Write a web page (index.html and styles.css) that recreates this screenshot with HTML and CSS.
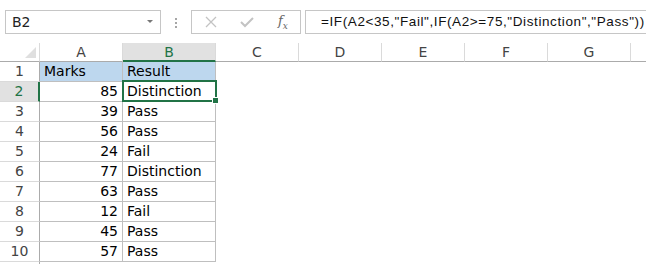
FILE: index.html
```html
<!DOCTYPE html>
<html lang="en">
<head>
    <meta charset="UTF-8">
    <title>Marks</title>
    <link rel="stylesheet" href="styles.css">
</head>
<body>
    <div class="toolbar">
        <div class="name-box">B2<span class="name-box__caret"></span></div>
        <div class="grip"><span></span><span></span><span></span></div>
        <div class="fx-box">
            <svg class="fx-box__icon" width="12" height="12" viewBox="0 0 12 12"><path d="M1 1 L11 11 M11 1 L1 11" stroke="#c3c3c3" stroke-width="1.3" fill="none"/></svg>
            <svg class="fx-box__icon" width="14" height="12" viewBox="0 0 14 12"><path d="M1 6 L5 10 L13 2" stroke="#c3c3c3" stroke-width="2" fill="none"/></svg>
            <span class="fx-box__fx">f<sub>x</sub></span>
        </div>
        <div class="formula">=IF(A2&lt;35,"Fail",IF(A2&gt;=75,"Distinction","Pass"))</div>
    </div>

    <div class="sheet">
        <div class="col-head col-head--corner"><span class="corner-tri"></span></div>
        <div class="col-head">A</div>
        <div class="col-head col-head--active">B</div>
        <div class="col-head">C</div>
        <div class="col-head">D</div>
        <div class="col-head">E</div>
        <div class="col-head">F</div>
        <div class="col-head">G</div>
        <div class="col-head col-head--rest"></div>

        <div class="row-head">1</div>
        <div class="cell cell--title">Marks</div>
        <div class="cell cell--title">Result</div>
        <div class="blank"></div>

        <div class="row-head row-head--active">2</div>
        <div class="cell cell--num">85</div>
        <div class="cell cell--selected">Distinction</div>
        <div class="blank"></div>

        <div class="row-head">3</div>
        <div class="cell cell--num">39</div>
        <div class="cell">Pass</div>
        <div class="blank"></div>

        <div class="row-head">4</div>
        <div class="cell cell--num">56</div>
        <div class="cell">Pass</div>
        <div class="blank"></div>

        <div class="row-head">5</div>
        <div class="cell cell--num">24</div>
        <div class="cell">Fail</div>
        <div class="blank"></div>

        <div class="row-head">6</div>
        <div class="cell cell--num">77</div>
        <div class="cell">Distinction</div>
        <div class="blank"></div>

        <div class="row-head">7</div>
        <div class="cell cell--num">63</div>
        <div class="cell">Pass</div>
        <div class="blank"></div>

        <div class="row-head">8</div>
        <div class="cell cell--num">12</div>
        <div class="cell">Fail</div>
        <div class="blank"></div>

        <div class="row-head">9</div>
        <div class="cell cell--num">45</div>
        <div class="cell">Pass</div>
        <div class="blank"></div>

        <div class="row-head">10</div>
        <div class="cell cell--num">57</div>
        <div class="cell">Pass</div>
        <div class="blank"></div>

        <div class="row-head row-head--next"></div>
    </div>
</body>
</html>
```

FILE: styles.css
```css
body {
    margin: 0;
    background: #fff;
    font-family: "DejaVu Sans", Verdana, sans-serif;
    font-size: 14px;
    color: #000;
    overflow: hidden;
    height: 264px;
}
.toolbar {
    display: flex;
    align-items: flex-start;
    height: 43px;
    padding: 10px 0 0 5px;
    box-sizing: border-box;
}
.name-box {
    position: relative;
    width: 156px;
    height: 24px;
    box-sizing: border-box;
    border: 1px solid #c6c6c6;
    padding-left: 6px;
    line-height: 22px;
    color: #222;
}
.name-box__caret {
    position: absolute;
    right: 7px;
    top: 9px;
    border-left: 3px solid transparent;
    border-right: 3px solid transparent;
    border-top: 3px solid #777;
}
.grip {
    display: flex;
    flex-direction: column;
    gap: 2px;
    padding: 8px 0 0 0;
    margin: 0 14px 0 14px;
}
.grip span {
    width: 2px;
    height: 2px;
    background: #a6a6a6;
}
.fx-box {
    display: flex;
    align-items: center;
    width: 110px;
    height: 24px;
    box-sizing: border-box;
    border: 1px solid #c6c6c6;
    padding-left: 13px;
    gap: 23px;
}
.fx-box__fx {
    font-family: "DejaVu Serif", serif;
    font-style: italic;
    font-size: 13px;
    color: #666;
    margin-left: 1px;
}
.fx-box__fx sub {
    font-size: 9px;
}
.formula {
    flex: 1;
    height: 24px;
    box-sizing: border-box;
    margin-left: 4px;
    border: 1px solid #c6c6c6;
    border-right: none;
    padding-left: 15px;
    font-family: "Liberation Sans", Arial, sans-serif;
    font-size: 13.5px;
    letter-spacing: 0.6px;
    line-height: 22px;
    color: #111;
    white-space: nowrap;
    overflow: hidden;
}
.sheet {
    display: grid;
    grid-template-columns: 40px 83px 93px 83px 83px 83px 83px 83px 1fr;
    grid-template-rows: 19px repeat(10, 20px) 3px;
}
.col-head {
    box-sizing: border-box;
    border-right: 1px solid #dadada;
    border-bottom: 1px solid #ababab;
    text-align: center;
    line-height: 18px;
    color: #444;
}
.col-head--corner {
    position: relative;
}
.corner-tri {
    position: absolute;
    right: 3px;
    bottom: 3px;
    border-left: 11px solid transparent;
    border-bottom: 11px solid #dfdfdf;
}
.col-head--active {
    background: #e1e1e1;
    border-bottom: 2px solid #217346;
    color: #217346;
}
.col-head--rest {
    border-right: none;
}
.row-head {
    box-sizing: border-box;
    border-right: 1px solid #ababab;
    border-bottom: 1px solid #dadada;
    text-align: center;
    line-height: 19px;
    color: #444;
}
.row-head--active {
    background: #e1e1e1;
    border-right: 2px solid #217346;
    color: #217346;
}
.row-head--next {
    border-bottom: none;
}
.cell {
    box-sizing: border-box;
    border-right: 1px solid #bfbfbf;
    border-bottom: 1px solid #bfbfbf;
    padding: 0 4px;
    line-height: 19px;
    white-space: nowrap;
}
.cell--num {
    text-align: right;
}
.cell--title {
    background: #bdd7ee;
}
.cell--selected {
    position: relative;
}
.cell--selected::after {
    content: "";
    position: absolute;
    left: -1px;
    top: -2px;
    right: -2px;
    bottom: -1px;
    border: 2px solid #217346;
}
.cell--selected::before {
    content: "";
    position: absolute;
    right: -4px;
    bottom: -3px;
    width: 5px;
    height: 5px;
    background: #217346;
    border: 1px solid #fff;
    z-index: 1;
}
.blank {
    grid-column: span 6;
}
```
